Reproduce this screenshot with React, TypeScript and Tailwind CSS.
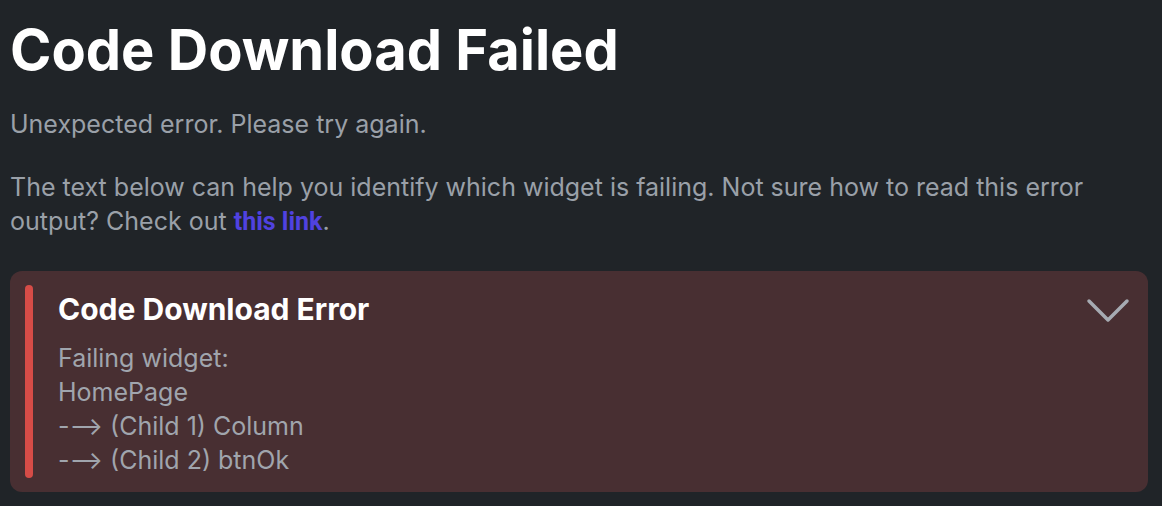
import React from "react";

export default function App() {
  return (
    <div className="min-h-[506px] w-[1162px] bg-[#202428] px-[10px] pt-[14px] pb-[14px]" style={{ fontFamily: "Inter, 'Open Sans', sans-serif" }}>
      <h1 className="text-[56px] font-bold leading-[72px] text-white">Code Download Failed</h1>
      <p className="mt-[21px] text-[25px] leading-[34px] text-[#9aa0a8]">Unexpected error. Please try again.</p>
      <p className="mt-[29px] w-[1120px] text-[25px] leading-[34px] text-[#9aa0a8]">
        The text below can help you identify which widget is failing. Not sure how to read this error output? Check out{" "}
        <a className="font-bold text-[#5042e0]" style={{ fontFamily: "Roboto, sans-serif" }}>this link</a>.
      </p>
      <div className="mt-[32px] flex w-[1138px] rounded-[12px] bg-[#482f32] py-[14px] pl-[15px] pr-[18px]">
        <div className="w-[8px] shrink-0 rounded-full bg-[#d64c47]" />
        <div className="ml-[25px] flex-1 pt-[8px] pb-[1px]">
          <div className="text-[30px] font-bold leading-[32px] text-white">Code Download Error</div>
          <div className="mt-[16px] text-[25px] leading-[34px] text-[#a0a5ad]">
            <div>Failing widget:</div>
            <div>HomePage</div>
            <div>-⟶ (Child 1) Column</div>
            <div>-⟶ (Child 2) btnOk</div>
          </div>
        </div>
        <svg width="44" height="26" viewBox="0 0 44 26" className="mt-[13px] shrink-0">
          <path d="M3 3 L22 22 L41 3" fill="none" stroke="#a6abb2" strokeWidth="3.5" strokeLinecap="round" strokeLinejoin="round" />
        </svg>
      </div>
    </div>
  );
}
